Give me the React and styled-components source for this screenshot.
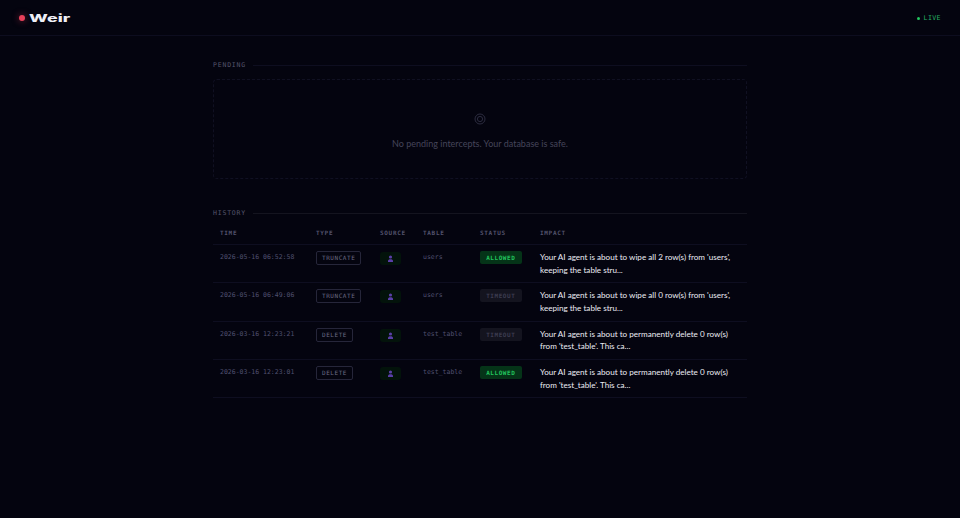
import React from 'react';
import styled, { createGlobalStyle } from 'styled-components';

const GlobalStyle = createGlobalStyle`
  html, body {
    margin: 0;
    padding: 0;
    background: #04040f;
    height: 100%;
  }
  body {
    font-family: 'Lato', 'Liberation Sans', sans-serif;
    overflow: hidden;
  }
`;

const mono = `'DejaVu Sans Mono', 'Liberation Mono', monospace`;

const Page = styled.div`
  min-height: 518px;
  background: #04040f;
`;

const Header = styled.header`
  height: 35px;
  display: flex;
  align-items: center;
  justify-content: space-between;
  padding: 0 19px 0 18.5px;
  border-bottom: 1px solid #0d0d1f;
`;

const Logo = styled.div`
  display: flex;
  align-items: center;
  gap: 4.5px;
`;

const LogoDot = styled.span`
  width: 6px;
  height: 6px;
  border-radius: 50%;
  background: #e8405a;
  box-shadow: 0 0 7px rgba(232, 64, 90, 0.55);
`;

const LogoText = styled.span`
  font-family: 'Inter', sans-serif;
  font-weight: 800;
  font-size: 11px;
  line-height: 12px;
  color: #eeeef6;
  display: inline-block;
  transform: scaleX(1.62);
  transform-origin: left center;
  width: 44px;
`;

const Live = styled.div`
  display: flex;
  align-items: center;
  gap: 4px;
  padding-top: 1px;
  font-family: ${mono};
  font-size: 6.6px;
  letter-spacing: 0.4px;
  color: #24b162;
`;

const LiveDot = styled.span`
  width: 3px;
  height: 3px;
  border-radius: 50%;
  background: #22c55e;
`;

const Main = styled.main`
  width: 534px;
  margin: 0 auto;
  padding-top: 24px;
  display: flex;
  flex-direction: column;
  gap: 29px;
`;

const SectionHead = styled.div`
  display: flex;
  align-items: center;
  gap: 7px;
  height: 10px;
`;

const SectionLabel = styled.span`
  font-family: ${mono};
  font-size: 6.5px;
  letter-spacing: 0.8px;
  color: #54546c;
`;

const SectionRule = styled.span`
  flex: 1;
  height: 1px;
  background: ${props => (props.$strong ? '#14141f' : '#0e0e20')};
`;

const EmptyBox = styled.div`
  margin-top: 9px;
  height: 100px;
  border: 1px dashed #101022;
  border-radius: 4px;
  display: flex;
  flex-direction: column;
  align-items: center;
  justify-content: center;
  gap: 13.5px;
  padding-top: 4.5px;
  box-sizing: border-box;
`;

const EmptyIcon = styled.svg`
  width: 12px;
  height: 12px;
  display: block;
`;

const EmptyText = styled.div`
  font-size: 9px;
  line-height: 12px;
  color: #44445a;
`;

const Table = styled.div`
  display: flex;
  flex-direction: column;
  margin-top: 4px;
`;

const HeadRow = styled.div`
  display: grid;
  grid-template-columns: 96px 64px 43px 57px 60px 1fr;
  padding: 0 0 1px 7px;
  height: 23px;
  align-items: center;
  border-bottom: 1px solid #0e0e20;
  box-sizing: border-box;
`;

const HeadCell = styled.div`
  font-family: ${mono};
  font-size: 6px;
  font-weight: 700;
  letter-spacing: 0.7px;
  color: #52526c;
`;

const Row = styled.div`
  display: grid;
  grid-template-columns: 96px 64px 43px 57px 60px 1fr;
  padding: 6px 0 0 7px;
  height: 38.3px;
  box-sizing: border-box;
  border-bottom: 1px solid #0e0e20;
  align-items: start;
`;

const MonoCell = styled.div`
  font-family: ${mono};
  font-size: 6.5px;
  line-height: 13px;
  color: #50506f;
`;

const TypeBadge = styled.span`
  display: block;
  width: fit-content;
  font-family: ${mono};
  font-size: 6px;
  line-height: 12px;
  letter-spacing: 0.55px;
  padding: 0 5px;
  border: 1px solid #26263a;
  border-radius: 2px;
  color: #6a6a84;
`;

const SourceBadge = styled.span`
  width: 21px;
  height: 13px;
  display: flex;
  align-items: center;
  justify-content: center;
  border-radius: 3px;
  background: #03130b;
  margin-top: 1px;
`;

const StatusBadge = styled.span`
  display: block;
  width: 41.5px;
  height: 13px;
  font-family: ${mono};
  font-size: 6px;
  font-weight: 700;
  line-height: 13px;
  letter-spacing: 0.55px;
  text-align: center;
  border-radius: 2px;
  background: ${props => (props.$kind === 'ALLOWED' ? '#053418' : '#14141f')};
  color: ${props => (props.$kind === 'ALLOWED' ? '#22c55e' : '#3c3c50')};
`;

const Impact = styled.div`
  font-size: 8.1px;
  line-height: 12.8px;
  color: #ececf4;
  width: 200px;
`;

const rows = [
  { time: '2026-05-16 06:52:58', type: 'TRUNCATE', table: 'users', status: 'ALLOWED', impact: "Your AI agent is about to wipe all 2 row(s) from 'users', keeping the table stru..." },
  { time: '2026-05-16 06:49:06', type: 'TRUNCATE', table: 'users', status: 'TIMEOUT', impact: "Your AI agent is about to wipe all 0 row(s) from 'users', keeping the table stru..." },
  { time: '2026-03-16 12:23:21', type: 'DELETE', table: 'test_table', status: 'TIMEOUT', impact: "Your AI agent is about to permanently delete 0 row(s) from 'test_table'. This ca..." },
  { time: '2026-03-16 12:23:01', type: 'DELETE', table: 'test_table', status: 'ALLOWED', impact: "Your AI agent is about to permanently delete 0 row(s) from 'test_table'. This ca..." },
];

const PersonIcon = () => (
  <svg width="7" height="7" viewBox="0 0 7 7" fill="#5a3fa8">
    <circle cx="3.5" cy="2" r="1.6" />
    <path d="M1 7V5.8C1 4.8 2 4.2 3.5 4.2S6 4.8 6 5.8V7Z" />
  </svg>
);

const App = () => (
  <Page>
    <GlobalStyle />
    <Header>
      <Logo>
        <LogoDot />
        <LogoText>Weir</LogoText>
      </Logo>
      <Live>
        <LiveDot />
        LIVE
      </Live>
    </Header>
    <Main>
      <section>
        <SectionHead>
          <SectionLabel>PENDING</SectionLabel>
          <SectionRule />
        </SectionHead>
        <EmptyBox>
          <EmptyIcon viewBox="0 0 12 12" fill="none" stroke="#2c2c40">
            <circle cx="6" cy="6" r="5" />
            <circle cx="6" cy="6" r="2.6" />
          </EmptyIcon>
          <EmptyText>No pending intercepts. Your database is safe.</EmptyText>
        </EmptyBox>
      </section>
      <section>
        <SectionHead>
          <SectionLabel>HISTORY</SectionLabel>
          <SectionRule $strong />
        </SectionHead>
        <Table>
          <HeadRow>
            <HeadCell>TIME</HeadCell>
            <HeadCell>TYPE</HeadCell>
            <HeadCell>SOURCE</HeadCell>
            <HeadCell>TABLE</HeadCell>
            <HeadCell>STATUS</HeadCell>
            <HeadCell>IMPACT</HeadCell>
          </HeadRow>
          {rows.map(row => (
            <Row key={row.time}>
              <MonoCell>{row.time}</MonoCell>
              <div><TypeBadge>{row.type}</TypeBadge></div>
              <SourceBadge><PersonIcon /></SourceBadge>
              <MonoCell>{row.table}</MonoCell>
              <StatusBadge $kind={row.status}>{row.status}</StatusBadge>
              <Impact>{row.impact}</Impact>
            </Row>
          ))}
        </Table>
      </section>
    </Main>
  </Page>
);

export default App;
